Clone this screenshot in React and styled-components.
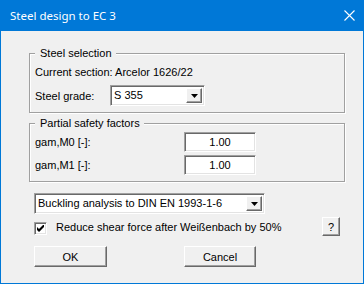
import React from 'react';
import styled, { createGlobalStyle, css } from 'styled-components';

const Global = createGlobalStyle`
  html, body { margin: 0; padding: 0; background: #f0f0f0; }
  body {
    font-family: "Liberation Sans", Arial, sans-serif;
    font-size: 11px;
    color: #000;
  }
  #root { width: 364px; height: 284px; }
`;

const sunken = css`
  box-sizing: border-box;
  border: 1px solid;
  border-color: #a0a0a0 #fff #fff #a0a0a0;
  box-shadow: inset 1px 1px 0 #696969, inset -1px -1px 0 #e3e3e3;
  background: #fff;
`;

const raised = css`
  box-sizing: border-box;
  border: 1px solid;
  border-color: #fff #696969 #696969 #fff;
  box-shadow: inset -1px -1px 0 #a0a0a0;
  background: #f0f0f0;
`;

const Window = styled.div`
  width: 364px;
  height: 284px;
  box-sizing: border-box;
  border: 1px solid #0078d7;
  border-top: none;
  background: #f0f0f0;
  display: flex;
  flex-direction: column;
`;

const TitleBar = styled.div`
  height: 31px;
  margin: 0 -1px;
  background: #0078d7;
  display: flex;
  align-items: center;
  justify-content: space-between;
  padding: 0 9px 0 10px;
  color: #fff;
  font-family: "Noto Sans", "Open Sans", sans-serif;
  font-size: 11.5px;
`;

const Title = styled.span`
  margin-top: -1px;
`;

const Body = styled.div`
  flex: 1;
  display: flex;
  flex-direction: column;
  padding: 16px 18px 0 28px;
`;

const Group = styled.fieldset`
  margin: ${p => p.$mt || 0}px 0 0 0;
  padding: 0 5px ${p => p.$pb}px 5px;
  border: 1px solid #a0a0a0;
  box-shadow: inset 1px 1px 0 #fff, 1px 1px 0 #fff;
  min-width: 0;
  display: flex;
  flex-direction: column;
`;

const Legend = styled.legend`
  padding: 0 4px 0 5px;
  margin-left: 0;
  line-height: 13px;
  background: #f0f0f0;
  position: relative;
`;

const InfoLine = styled.div`
  line-height: 13px;
  margin-top: 6px;
`;

const FieldRow = styled.div`
  display: grid;
  grid-template-columns: ${p => p.$label}px auto;
  align-items: center;
  margin-top: ${p => p.$mt}px;
`;

const Combo = styled.div`
  ${sunken};
  width: ${p => p.$w}px;
  height: 21px;
  display: flex;
  align-items: stretch;
  padding: 2px;
`;

const ComboText = styled.span`
  flex: 1;
  padding-left: 1px;
  line-height: 15px;
  white-space: nowrap;
  overflow: hidden;
`;

const ArrowBtn = styled.span`
  ${raised};
  width: 16px;
  display: flex;
  align-items: center;
  justify-content: center;
`;

const NumInput = styled.div`
  ${sunken};
  width: 72px;
  height: 20px;
  line-height: 18px;
  text-align: center;
`;

const Section = styled.div`
  display: flex;
  flex-direction: column;
  padding-left: 5px;
  padding-right: 5px;
  margin-top: ${p => p.$mt}px;
`;

const CheckRow = styled.div`
  display: flex;
  align-items: center;
  height: 19px;
  margin-top: 3px;
`;

const CheckBox = styled.span`
  ${sunken};
  width: 13px;
  height: 13px;
  display: flex;
  align-items: center;
  justify-content: center;
  margin-top: 3px;
`;

const CheckLabel = styled.span`
  margin-left: 9px;
  flex: 1;
  margin-top: 1px;
`;

const HelpBtn = styled.span`
  ${raised};
  width: 18px;
  height: 19px;
  display: flex;
  align-items: center;
  justify-content: center;
`;

const ButtonRow = styled.div`
  display: grid;
  grid-template-columns: 150px auto;
  margin-top: 10px;
`;

const PushButton = styled.span`
  ${raised};
  width: ${p => p.$w}px;
  height: 21px;
  display: flex;
  align-items: center;
  justify-content: center;
`;

const Arrow = () => (
  <svg width="7" height="4" viewBox="0 0 7 4">
    <polygon points="0,0 7,0 3.5,4" fill="#000" />
  </svg>
);

const CloseIcon = () => (
  <svg width="11" height="11" viewBox="0 0 11 11">
    <path d="M0.5 0.5 L10.5 10.5 M10.5 0.5 L0.5 10.5" stroke="#fff" strokeWidth="1.1" fill="none" />
  </svg>
);

const Check = () => (
  <svg width="7" height="7" viewBox="0 0 7 7">
    <path d="M0 2 L0 5 L2 7 L7 2 L7 -1 L2 4 Z" fill="#000" />
  </svg>
);

export default function App() {
  return (
    <>
      <Global />
      <Window>
        <TitleBar>
          <Title>Steel design to EC 3</Title>
          <CloseIcon />
        </TitleBar>
        <Body>
          <Group $pb={6}>
            <Legend>Steel selection</Legend>
            <InfoLine>Current section: Arcelor 1626/22</InfoLine>
            <FieldRow $label={75} $mt={6}>
              <span>Steel grade:</span>
              <Combo $w={95}>
                <ComboText>S 355</ComboText>
                <ArrowBtn><Arrow /></ArrowBtn>
              </Combo>
            </FieldRow>
          </Group>
          <Group $mt={4} $pb={6}>
            <Legend>Partial safety factors</Legend>
            <FieldRow $label={149} $mt={2}>
              <span>gam,M0 [-]:</span>
              <NumInput>1.00</NumInput>
            </FieldRow>
            <FieldRow $label={149} $mt={3}>
              <span>gam,M1 [-]:</span>
              <NumInput>1.00</NumInput>
            </FieldRow>
          </Group>
          <Section $mt={11}>
            <Combo $w={231}>
              <ComboText>Buckling analysis to DIN EN 1993-1-6</ComboText>
              <ArrowBtn><Arrow /></ArrowBtn>
            </Combo>
            <CheckRow>
              <CheckBox><Check /></CheckBox>
              <CheckLabel>Reduce shear force after Weißenbach by 50%</CheckLabel>
              <HelpBtn>?</HelpBtn>
            </CheckRow>
            <ButtonRow>
              <PushButton $w={73}>OK</PushButton>
              <PushButton $w={72}>Cancel</PushButton>
            </ButtonRow>
          </Section>
        </Body>
      </Window>
    </>
  );
}
